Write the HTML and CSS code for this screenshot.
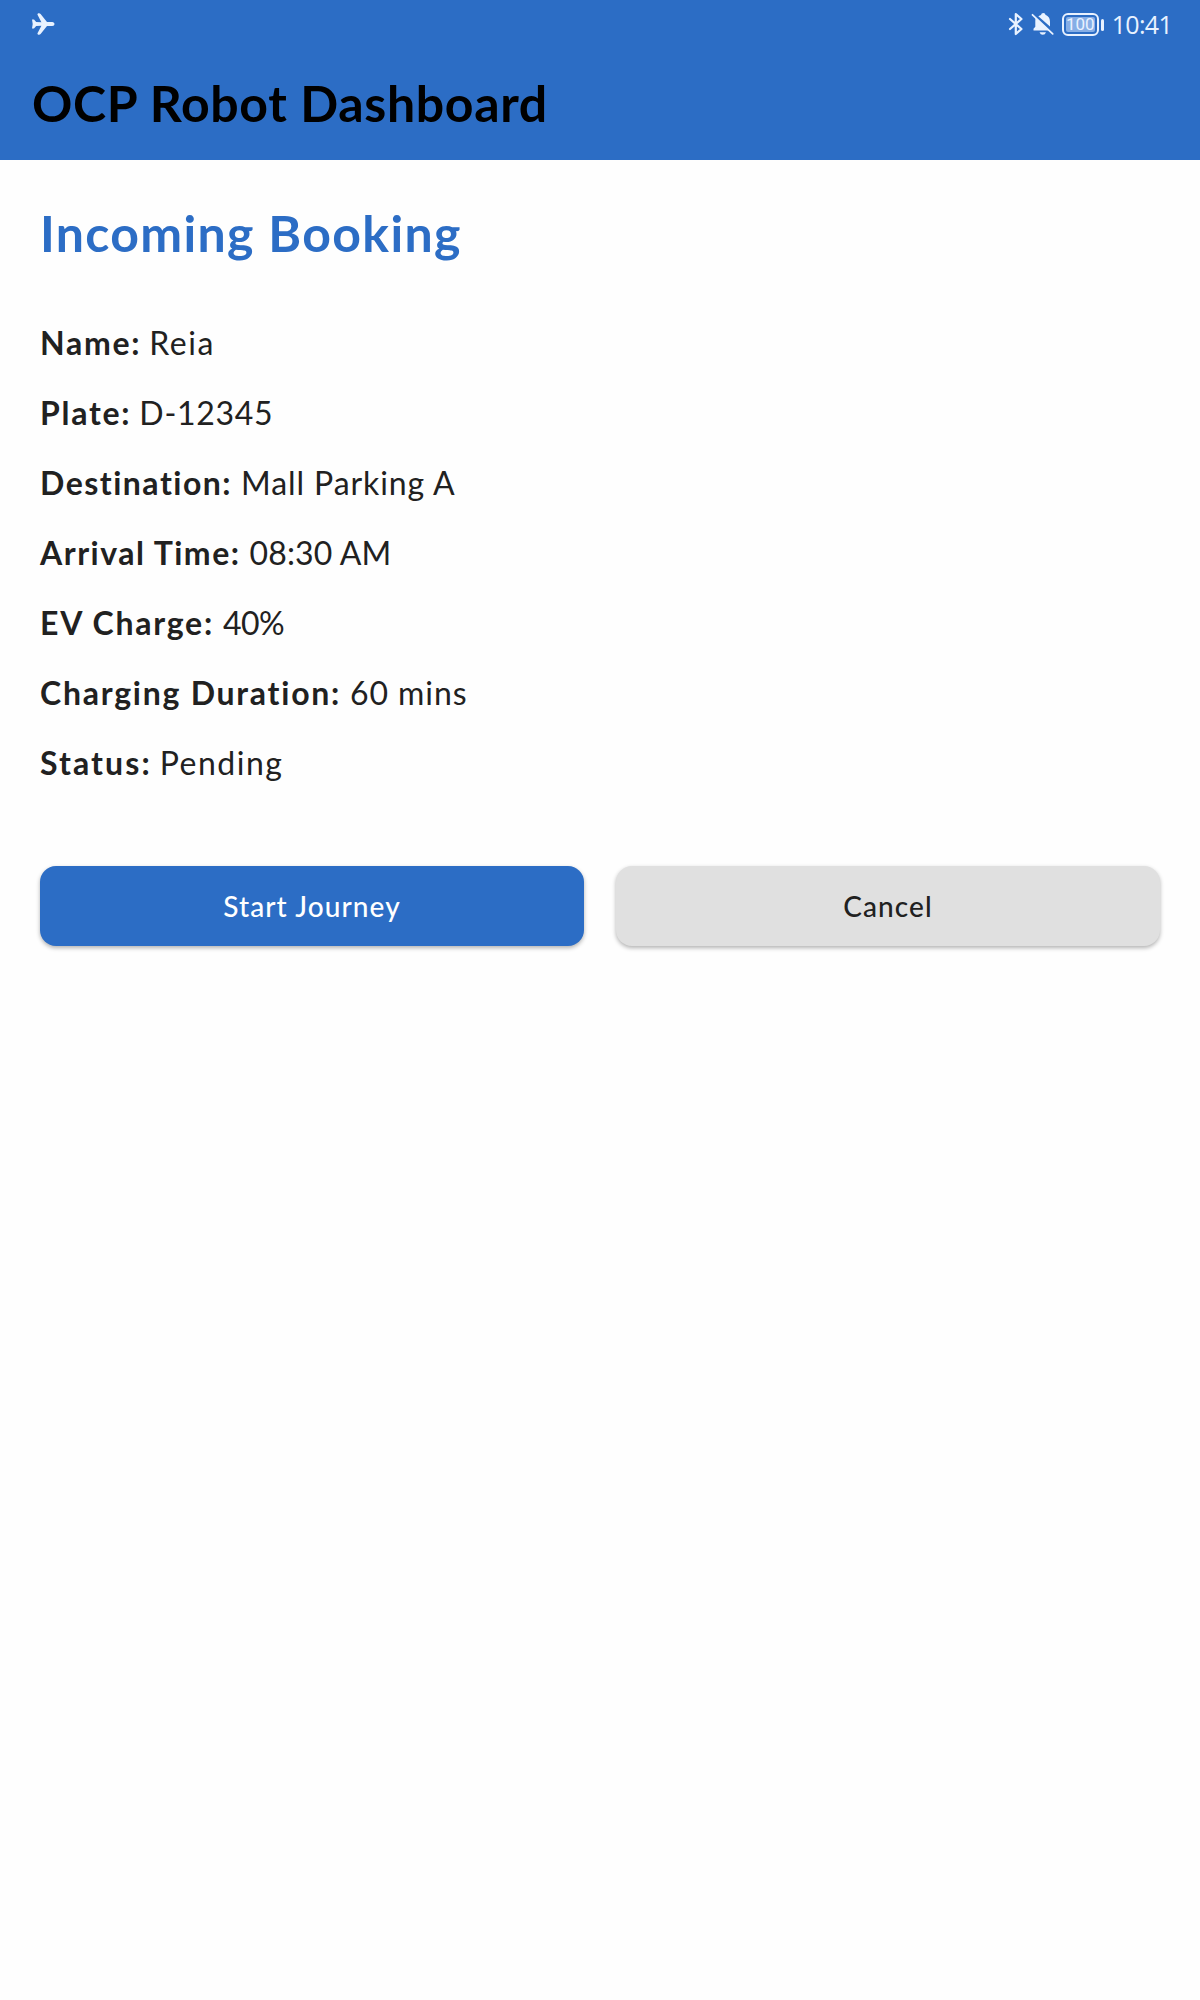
FILE: index.html
```html
<!DOCTYPE html>
<html lang="en">
<head>
<meta charset="utf-8">
<title>OCP Robot Dashboard</title>
<link rel="stylesheet" href="styles.css">
</head>
<body>
<header class="app-bar">
  <div class="status-bar">
    <svg class="plane" width="24" height="22" viewBox="0 0 24 22"><path d="M1 6.500h2l2.200 2.600 5.200.1L6.500 1.800C6 .3 8.500-.5 9.600 1l6.400 8h5.200c3 0 3 4 0 4H16l-6.400 8C8.500 22.500 6 21.700 6.500 20.200l3.900-7.400-5.200.1L3 15.500H1L1.700 11z" fill="currentColor"/></svg>
    <div class="status-right">
      <svg class="bluetooth" width="16" height="24" viewBox="0 0 16 24"><path d="M2 7 13.500 17 7.800 22V2l5.700 5L2 17" fill="none" stroke="currentColor" stroke-width="2.200" stroke-linecap="round" stroke-linejoin="round"/></svg>
      <svg class="bell" width="24" height="24" viewBox="0 0 24 24"><path d="M7.300 4.200 10 3q.3-2 2.300-2t2.300 2C18 4.300 19 7 19 10v4.500zM4.600 5.800 18.500 18.500H2.500v-1.800l1.800-2V9.500q0-2 .3-3.700zM8.500 20.200h6.500q-.8 2.600-3.200 2.600T8.500 20.200z" fill="currentColor"/><path d="M1.500 2.800 21.700 21.800" stroke="currentColor" stroke-width="1.800" stroke-linecap="round"/></svg>
      <div class="battery"><span class="battery-level">100</span></div>
      <time class="clock">10:41</time>
    </div>
  </div>
  <h1 class="app-title">OCP Robot Dashboard</h1>
</header>
<main class="booking">
  <h2 class="section-title">Incoming Booking</h2>
  <dl class="details">
    <div class="row"><dt>Name:</dt><dd class="wide">Reia</dd></div>
    <div class="row"><dt>Plate:</dt><dd class="plate">D-12345</dd></div>
    <div class="row"><dt class="snug">Destination:</dt><dd class="place">Mall Parking A</dd></div>
    <div class="row"><dt class="snug">Arrival Time:</dt><dd class="time">08:30 AM</dd></div>
    <div class="row"><dt>EV Charge:</dt><dd class="percent">40%</dd></div>
    <div class="row"><dt>Charging Duration:</dt><dd class="duration">60 mins</dd></div>
    <div class="row"><dt class="loose">Status:</dt><dd class="wide">Pending</dd></div>
  </dl>
  <div class="actions">
    <button class="button primary">Start Journey</button>
    <button class="button secondary">Cancel</button>
  </div>
</main>
</body>
</html>
```
FILE: styles.css
```css
* { box-sizing: border-box; }

body {
  margin: 0;
  min-height: 2000px;
  background: #fefefe;
  color: #212121;
  font-family: Lato, sans-serif;
}

svg { display: block; }

.app-bar {
  height: 160px;
  background: #2c6dc5;
}

.status-bar {
  height: 48px;
  padding: 0 28px 0 31px;
  display: flex;
  justify-content: space-between;
  align-items: center;
  color: #e9f2ff;
}

.status-right {
  display: flex;
  align-items: center;
}

.bell { margin-left: 7px; }

.battery {
  position: relative;
  width: 37px;
  height: 23px;
  margin-left: 7px;
  padding: 2px;
  border: 2px solid currentColor;
  border-radius: 6px;
}

.battery::after {
  content: "";
  position: absolute;
  top: 4px;
  right: -7px;
  width: 3px;
  height: 12px;
  border-radius: 2px;
  background: currentColor;
}

.battery-level {
  display: block;
  height: 15px;
  border-radius: 2px;
  background: #86aee6;
  font: 400 17px/15px Roboto, sans-serif;
  text-align: center;
}

.clock {
  margin-left: 13px;
  font: 25px/30px "Open Sans", sans-serif;
  letter-spacing: -0.7px;
}

.plane, .bluetooth, .bell, .battery { flex: none; }

.app-title, .section-title {
  margin: 0;
  font-size: 50px;
  line-height: 60px;
  font-weight: 700;
  white-space: nowrap;
}

.app-title {
  padding: 25px 32px 0;
  color: #000;
  letter-spacing: 0.65px;
}

.booking { padding: 43px 40px 0; }

.section-title {
  color: #2c6dc5;
  letter-spacing: 1.33px;
}

.details {
  margin: 60px 0 83px;
  display: flex;
  flex-direction: column;
  gap: 30px;
}

.row {
  display: flex;
  gap: 8px;
  font-size: 32px;
  line-height: 40px;
  white-space: nowrap;
}

dt {
  font-weight: 700;
  letter-spacing: 1.75px;
}

dd {
  margin: 0;
  letter-spacing: 0.9px;
}

.snug { letter-spacing: 1.5px; }
.loose { letter-spacing: 2.1px; }
.wide { letter-spacing: 1.5px; }
.plate { letter-spacing: 0.7px; }
.place { padding-left: 1px; }
.time { padding-left: 1px; letter-spacing: 0.15px; }
.percent { padding-left: 1px; letter-spacing: -0.5px; }
.duration { padding-left: 1px; }

.actions {
  display: grid;
  grid-template-columns: 1fr 1fr;
  gap: 32px;
}

.button {
  height: 80px;
  padding: 0;
  border: 0;
  border-radius: 16px;
  font: 500 28px/34px Lato, sans-serif;
  letter-spacing: 1.1px;
  box-shadow: 0 2px 4px rgba(0, 0, 0, 0.3);
}

.primary {
  background: #2c6dc5;
  color: #fff;
}

.secondary {
  background: #e0e0e0;
  color: #212121;
}
```
